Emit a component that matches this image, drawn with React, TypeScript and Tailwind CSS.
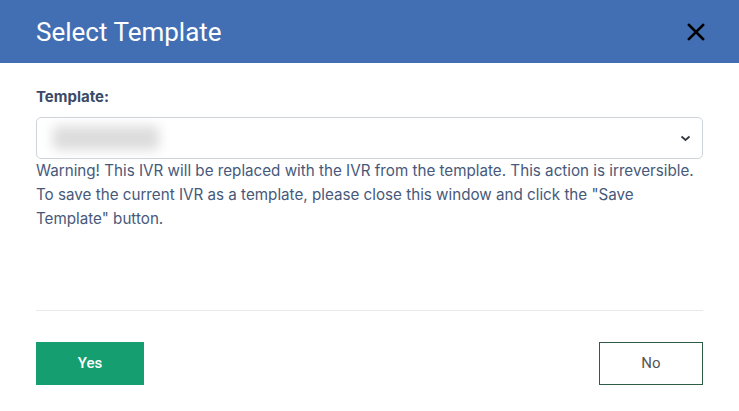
import React from "react";

export default function App() {
  return (
    <div className="w-[739px] h-[411px] bg-white font-['Roboto',sans-serif] overflow-hidden">
      <div className="h-[63px] bg-[#426fb3] flex items-center justify-between pl-9 pr-[34px]">
        <h1 className="text-white text-[26px] leading-none">Select Template</h1>
        <svg width="18" height="18" viewBox="0 0 18 18" className="text-black">
          <path d="M2 2 L16 16 M16 2 L2 16" stroke="currentColor" strokeWidth="2.6" strokeLinecap="square" />
        </svg>
      </div>
      <div className="px-9 pt-[24px] font-['Inter',sans-serif]">
        <label className="block text-[15px] font-bold text-[#3b4a66] leading-5">Template:</label>
        <div className="mt-[10px] h-[42px] border border-[#cfd4db] rounded-[5px] flex items-center justify-between pl-[16px] pr-[11px]">
          <div className="w-[106px] h-[24px] bg-[#dcdcdc] rounded blur-[6px]" />
          <svg width="11" height="7" viewBox="0 0 11 7">
            <path d="M1.5 1.5 L5.5 5 L9.5 1.5" fill="none" stroke="#343a40" strokeWidth="1.8" />
          </svg>
        </div>
        <p className="text-[15.2px] leading-6 text-[#47597a] mt-0">
          Warning! This IVR will be replaced with the IVR from the template. This action is irreversible.
          To save the current IVR as a template, please close this window and click the "Save Template" button.
        </p>
        <div className="mt-[79px] border-t border-[#e9e9e9]" />
        <div className="mt-[31px] flex justify-between font-['Roboto',sans-serif]">
          <button className="w-[108px] h-[43px] bg-[#159f70] text-white text-[15px] font-medium">Yes</button>
          <button className="w-[104px] h-[43px] border border-[#2e5c47] text-[#555] text-[15px]">No</button>
        </div>
      </div>
    </div>
  );
}
